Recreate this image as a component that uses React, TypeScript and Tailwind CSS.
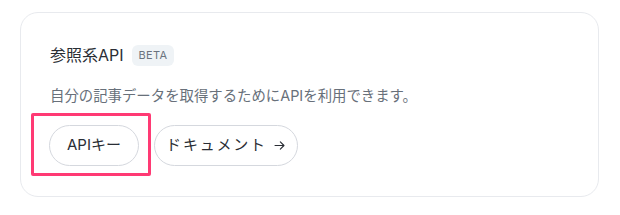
import React from "react";

const font = { fontFamily: 'Inter, "Noto Sans CJK JP", sans-serif' };

const ArrowRight = () => (
  <svg width="13" height="13" viewBox="0 0 16 16" fill="none" className="ml-[6px]">
    <path d="M2.5 8h10.5M9 3.5 13.5 8 9 12.5" stroke="currentColor" strokeWidth="1.4" strokeLinecap="round" strokeLinejoin="round" />
  </svg>
);

export default function App() {
  return (
    <div className="bg-white w-[620px] h-[215px] pt-[12px] pl-[20px]" style={font}>
      <div className="w-[579px] h-[185px] rounded-[18px] border border-[#e8eaee] pl-[29px] pt-[30px]">
        <div className="flex items-center h-[24px]">
          <span className="text-[16px] text-[#2a2e35] leading-6">参照系API</span>
          <span className="ml-[8px] h-[21px] px-[7px] rounded-[6px] bg-[#eff3f6] text-[11px] text-[#6b737e] flex items-center tracking-[0.03em]">
            BETA
          </span>
        </div>
        <p className="mt-[17px] text-[14.4px] text-[#68707a] leading-6">
          自分の記事データを取得するためにAPIを利用できます。
        </p>
        <div className="mt-[17px] flex items-center gap-[15px] -ml-[1px]">
          <div className="relative">
            <button className="h-[41px] w-[90px] rounded-full border border-[#d5d8de] bg-white text-[15px] text-[#2a2e35] flex items-center justify-center">
              APIキー
            </button>
            <div className="absolute -left-[18px] -top-[12px] w-[120px] h-[63px] border-[3px] border-[#ff3a74] rounded-[2px] pointer-events-none" />
          </div>
          <button className="h-[41px] w-[144px] rounded-full border border-[#d5d8de] bg-white text-[15px] text-[#2a2e35] flex items-center justify-center">
            <span className="tracking-[0.12em]">ドキュメント</span>
            <ArrowRight />
          </button>
        </div>
      </div>
    </div>
  );
}
